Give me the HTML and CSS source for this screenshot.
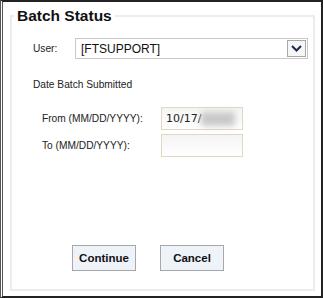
FILE: index.html
```html
<!DOCTYPE html>
<html lang="en">
<head>
    <meta charset="UTF-8">
    <meta name="viewport" content="width=device-width, initial-scale=1.0">
    <title>Batch Status</title>
    <link rel="stylesheet" href="styles.css">
</head>
<body>
    <div class="frame">
        <fieldset class="panel">
            <legend>Batch Status</legend>

            <div class="user-row">
                <label class="user-label">User:</label>
                <div class="select">
                    <span class="select-text">[FTSUPPORT]</span>
                    <span class="select-arrow">
                        <svg width="11" height="7" viewBox="0 0 11 7">
                            <path d="M1 1 L5.5 5.5 L10 1" fill="none" stroke="#1c2a4a" stroke-width="2"/>
                        </svg>
                    </span>
                </div>
            </div>

            <div class="section-title">Date Batch Submitted</div>

            <div class="date-grid">
                <label>From (MM/DD/YYYY):</label>
                <div class="date-input">10/17/<span class="redacted"></span></div>
                <label>To (MM/DD/YYYY):</label>
                <div class="date-input"></div>
            </div>

            <div class="actions">
                <button type="button">Continue</button>
                <button type="button">Cancel</button>
            </div>
        </fieldset>
    </div>
</body>
</html>
```

FILE: styles.css
```css
html, body {
    margin: 0;
    padding: 0;
    background: #fff;
}

body {
    font-family: "Liberation Sans", Arial, sans-serif;
    color: #222;
}

.frame {
    width: 323px;
    height: 298px;
    box-sizing: border-box;
    border: 2px solid #222;
    border-left: 3px double #555;
    padding: 4px 6px 5px 7px;
}

.panel {
    margin: 0;
    height: 100%;
    box-sizing: border-box;
    border: 2px solid #ececec;
    padding: 0 5px 0 21px;
}

.panel legend {
    font-size: 15.5px;
    font-weight: bold;
    color: #111;
    padding: 0 3px;
    margin-left: -19px;
    line-height: 20px;
}

.user-row {
    display: flex;
    align-items: center;
    margin-top: 12px;
}

.user-label {
    font-size: 10.2px;
    width: 42px;
}

.select {
    flex: 1;
    height: 19px;
    border: 1px solid #c8c8c8;
    display: flex;
    align-items: center;
    justify-content: space-between;
    padding-left: 5px;
}

.select-text {
    font-size: 12px;
    color: #111;
}

.select-arrow {
    width: 17px;
    height: 15px;
    margin-right: 1px;
    border: 1px solid #a8a8a8;
    background: #f6f6f6;
    display: flex;
    align-items: center;
    justify-content: center;
}

.section-title {
    font-size: 10.2px;
    margin-top: 20px;
}

.date-grid {
    display: grid;
    grid-template-columns: 119px 82px;
    row-gap: 4px;
    align-items: center;
    margin-top: 17px;
    padding-left: 9px;
}

.date-grid label {
    font-size: 10.2px;
}

.date-input {
    height: 23px;
    box-sizing: border-box;
    border: 1px solid #e0d8c0;
    background: linear-gradient(#f4f4f4, #fff);
    font-family: "DejaVu Sans", Verdana, sans-serif;
    font-size: 11px;
    color: #222;
    padding-left: 4px;
    display: flex;
    align-items: center;
}

.redacted {
    display: inline-block;
    width: 34px;
    height: 14px;
    background: #c8c8c8;
    filter: blur(3px);
}

.actions {
    display: flex;
    gap: 24px;
    margin-top: 88px;
    padding-left: 39px;
}

.actions button {
    width: 64px;
    height: 26px;
    border: 1px solid #a8a8a8;
    background: #eef2f9;
    font-family: "Liberation Sans", Arial, sans-serif;
    font-size: 11.5px;
    font-weight: bold;
    color: #111;
    padding: 0;
}
```
